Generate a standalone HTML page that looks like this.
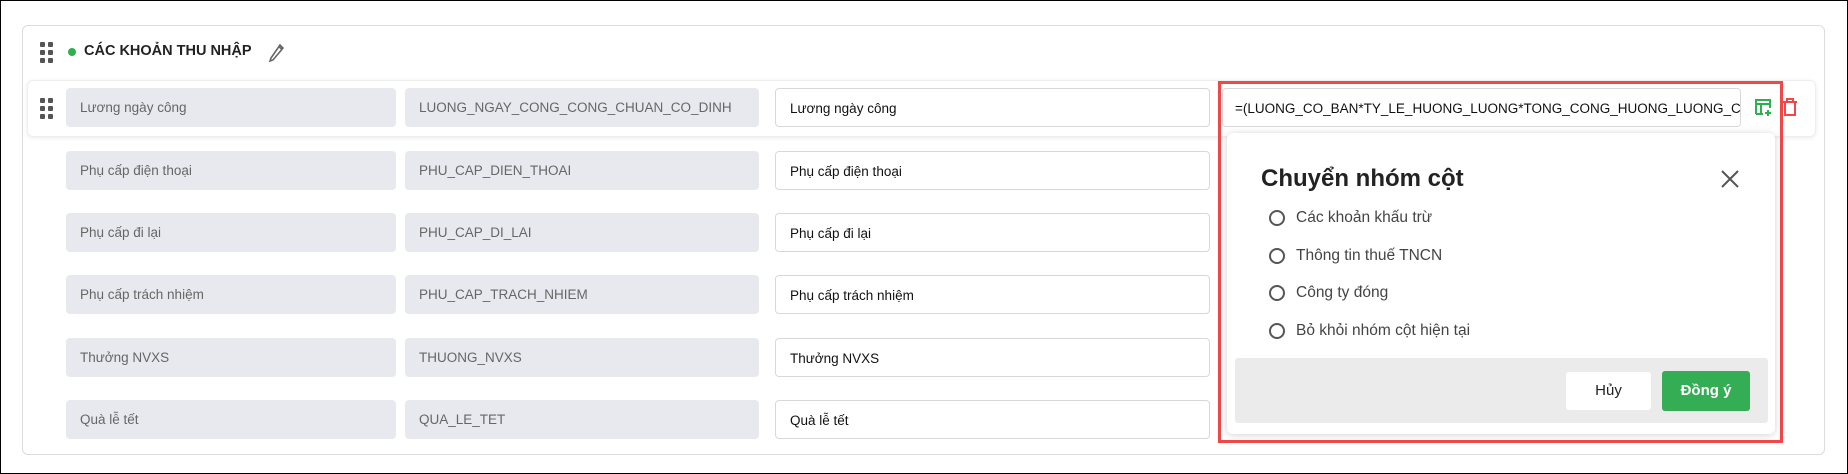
<!DOCTYPE html>
<html><head><meta charset="utf-8"><style>
*{box-sizing:border-box;margin:0;padding:0}
body{width:1848px;height:474px;background:#fff;font-family:"Liberation Sans",sans-serif;position:relative;overflow:hidden;border:1px solid #000}
.abs{position:absolute}
.card{left:21px;top:24px;width:1803px;height:430px;border:1px solid #dcdcdc;border-radius:6px}
.drag{width:14px;height:20px}
.drag i{position:absolute;width:5px;height:5px;background:#555;border-radius:1px}
.f{position:absolute;height:39px;border-radius:4px;font-size:13.5px;line-height:39px;padding-left:14px;white-space:nowrap;overflow:hidden}
.g{background:#e8e9ee;color:#666}
.w{background:#fff;border:1px solid #d8d8d8;color:#111}
.rad{position:absolute;left:1268px;width:16px;height:16px;border:2px solid #555;border-radius:50%}
.rt{position:absolute;left:1295px;font-size:15.5px;color:#444}
</style></head><body>
<div class="abs card"></div>
<div class="abs drag" style="left:39px;top:41px"><i style="left:0;top:0"></i><i style="left:8px;top:0"></i><i style="left:0;top:8px"></i><i style="left:8px;top:8px"></i><i style="left:0;top:16px"></i><i style="left:8px;top:16px"></i></div>
<div class="abs" style="left:67px;top:47px;width:8px;height:8px;border-radius:50%;background:#2db04d"></div>
<div class="abs" style="left:83px;top:42px;font-size:14.5px;font-weight:bold;color:#222">CÁC KHOẢN THU NHẬP</div>
<svg class="abs" style="left:266px;top:41px" width="18" height="20" viewBox="0 0 18 20"><path d="M4 16 L3 19 L6 18 L16 6 L13 3 Z M12 4.5 L15 7.5" fill="none" stroke="#666" stroke-width="1.6"/></svg>
<div class="abs" style="left:26px;top:79px;width:1789px;height:57px;background:#fff;border:1px solid #eee;border-radius:6px;box-shadow:0 1px 4px rgba(0,0,0,.08)"></div>
<div class="abs drag" style="left:39px;top:97px"><i style="left:0;top:0"></i><i style="left:8px;top:0"></i><i style="left:0;top:8px"></i><i style="left:8px;top:8px"></i><i style="left:0;top:16px"></i><i style="left:8px;top:16px"></i></div>

<div class="f g" style="left:65px;top:87px;width:330px">Lương ngày công</div>
<div class="f g" style="left:404px;top:87px;width:354px">LUONG_NGAY_CONG_CONG_CHUAN_CO_DINH</div>
<div class="f w" style="left:774px;top:87px;width:435px">Lương ngày công</div>
<div class="f w" style="left:1221px;top:87px;width:519px;padding-left:12px">=(LUONG_CO_BAN*TY_LE_HUONG_LUONG*TONG_CONG_HUONG_LUONG_CONG</div>

<div class="f g" style="left:65px;top:150px;width:330px">Phụ cấp điện thoại</div>
<div class="f g" style="left:404px;top:150px;width:354px">PHU_CAP_DIEN_THOAI</div>
<div class="f w" style="left:774px;top:150px;width:435px">Phụ cấp điện thoại</div>
<div class="f g" style="left:65px;top:212px;width:330px">Phụ cấp đi lại</div>
<div class="f g" style="left:404px;top:212px;width:354px">PHU_CAP_DI_LAI</div>
<div class="f w" style="left:774px;top:212px;width:435px">Phụ cấp đi lại</div>
<div class="f g" style="left:65px;top:274px;width:330px">Phụ cấp trách nhiệm</div>
<div class="f g" style="left:404px;top:274px;width:354px">PHU_CAP_TRACH_NHIEM</div>
<div class="f w" style="left:774px;top:274px;width:435px">Phụ cấp trách nhiệm</div>
<div class="f g" style="left:65px;top:337px;width:330px">Thưởng NVXS</div>
<div class="f g" style="left:404px;top:337px;width:354px">THUONG_NVXS</div>
<div class="f w" style="left:774px;top:337px;width:435px">Thưởng NVXS</div>
<div class="f g" style="left:65px;top:399px;width:330px">Quà lễ tết</div>
<div class="f g" style="left:404px;top:399px;width:354px">QUA_LE_TET</div>
<div class="f w" style="left:774px;top:399px;width:435px">Quà lễ tết</div>

<svg class="abs" style="left:1752px;top:96px" width="20" height="20" viewBox="0 0 20 20"><path d="M3 17V3h14v8 M3 7h14 M8 7v10 M3 17h7" fill="none" stroke="#2db04d" stroke-width="2"/><path d="M15 13v6 M12 16h6" stroke="#2db04d" stroke-width="2"/></svg>
<svg class="abs" style="left:1780px;top:96px" width="18" height="20" viewBox="0 0 18 20"><path d="M2 5h14 M6 5V2h6v3 M4 5v13h10V5" fill="none" stroke="#f04848" stroke-width="2"/></svg>

<div class="abs" style="left:1217px;top:80px;width:565px;height:362px;border:3px solid #f04848"></div>
<div class="abs" style="left:1226px;top:132px;width:548px;height:301px;background:#fff;border-radius:6px;box-shadow:0 1px 8px rgba(0,0,0,.18)"></div>
<div class="abs" style="left:1260px;top:164px;font-size:24px;font-weight:bold;color:#222">Chuyển nhóm cột</div>
<svg class="abs" style="left:1719px;top:168px" width="20" height="20" viewBox="0 0 20 20"><path d="M2 2L18 18M18 2L2 18" stroke="#555" stroke-width="2"/></svg>
<div class="rad" style="top:209px"></div><div class="rt" style="top:208px">Các khoản khấu trừ</div>
<div class="rad" style="top:247px"></div><div class="rt" style="top:246px">Thông tin thuế TNCN</div>
<div class="rad" style="top:284px"></div><div class="rt" style="top:283px">Công ty đóng</div>
<div class="rad" style="top:322px"></div><div class="rt" style="top:321px">Bỏ khỏi nhóm cột hiện tại</div>
<div class="abs" style="left:1234px;top:357px;width:533px;height:65px;background:#ebebeb;border-radius:3px"></div>
<div class="abs" style="left:1565px;top:371px;width:85px;height:38px;background:#fff;border-radius:3px;font-size:15px;line-height:38px;text-align:center;color:#222">Hủy</div>
<div class="abs" style="left:1661px;top:370px;width:88px;height:40px;background:#34ad54;border-radius:3px;font-size:15px;font-weight:bold;line-height:40px;text-align:center;color:#fff">Đồng ý</div>
</body></html>
